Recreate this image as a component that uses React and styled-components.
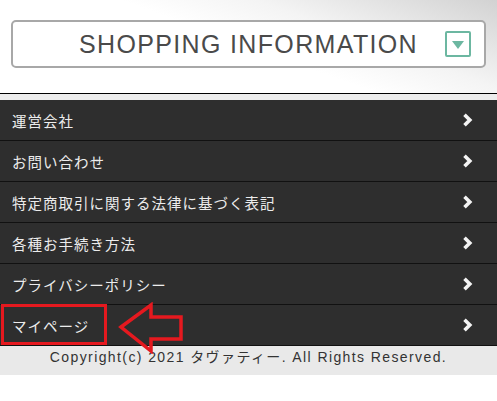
import React from 'react';
import styled, { createGlobalStyle } from 'styled-components';

const GlobalStyle = createGlobalStyle`
  html, body {
    margin: 0;
    padding: 0;
    background: #ffffff;
  }
  body {
    font-family: "Liberation Sans", "Noto Sans CJK JP", sans-serif;
  }
`;

const links = [
  '運営会社',
  'お問い合わせ',
  '特定商取引に関する法律に基づく表記',
  '各種お手続き方法',
  'プライバシーポリシー',
  'マイページ',
];

const App = () => {
  return (
    <Page>
      <GlobalStyle />
      <Header>
        <InfoBox>
          <span />
          <InfoTitle>SHOPPING INFORMATION</InfoTitle>
          <ToggleIcon>
            <svg width="12" height="8" viewBox="0 0 12 8">
              <polygon points="0,0 12,0 6,8" fill="#6cb7a1" />
            </svg>
          </ToggleIcon>
        </InfoBox>
      </Header>
      <Gap />
      <LinkList>
        {links.map((label) => (
          <LinkRow key={label}>
            <LinkLabel>{label}</LinkLabel>
            <Chevron width="11" height="14" viewBox="0 0 11 14">
              <polyline points="2.5,1.8 7.8,7 2.5,12.2" fill="none" stroke="#f4f4f4" strokeWidth="3.6" />
            </Chevron>
          </LinkRow>
        ))}
        <Highlight />
        <PointerArrow width="66" height="52" viewBox="0 0 66 52">
          <polygon
            points="3,25 33,3 33,15 63,15 63,37 33,37 33,49"
            fill="none"
            stroke="#e5191f"
            strokeWidth="3.5"
            strokeLinejoin="miter"
          />
        </PointerArrow>
      </LinkList>
      <Footer>Copyright(c) 2021 タヴァティー. All Rights Reserved.</Footer>
    </Page>
  );
};

const Page = styled.div`
  width: 100%;
`;

const Header = styled.header`
  height: 94px;
  box-sizing: border-box;
  padding: 20px 11px 0;
  background: linear-gradient(200deg, #d2d2d2 0%, #f4f4f4 32%, #ffffff 50%);
  border-bottom: 1px solid #000;
`;

const InfoBox = styled.div`
  height: 48px;
  box-sizing: border-box;
  border: 2px solid #a8a8a8;
  border-radius: 5px;
  background: #ffffff;
  display: grid;
  grid-template-columns: 1fr auto 1fr;
  align-items: center;
  padding: 0 13px;
`;

const InfoTitle = styled.h2`
  margin: 0;
  font-family: "Liberation Sans", Arial, sans-serif;
  font-weight: normal;
  font-size: 25px;
  letter-spacing: 1.35px;
  color: #4a4a4a;
  white-space: nowrap;
`;

const ToggleIcon = styled.div`
  justify-self: end;
  width: 26px;
  height: 26px;
  box-sizing: border-box;
  border: 2px solid #6cb7a1;
  border-radius: 2px;
  display: flex;
  align-items: center;
  justify-content: center;
  padding-top: 1px;
`;

const Gap = styled.div`
  height: 6px;
  background: #ececec;
`;

const LinkList = styled.nav`
  position: relative;
  background: #2e2e2e;
`;

const LinkRow = styled.div`
  height: 40px;
  display: flex;
  align-items: center;
  justify-content: space-between;
  padding: 0 24px 0 12px;
  border-bottom: 1px solid #111111;

  &:last-of-type {
    border-bottom: none;
  }
`;

const LinkLabel = styled.span`
  font-family: "Noto Sans CJK JP", sans-serif;
  font-size: 14.5px;
  letter-spacing: 1px;
  color: #ececec;
`;

const Chevron = styled.svg`
  display: block;
`;

const Highlight = styled.div`
  position: absolute;
  left: 1px;
  top: 204px;
  width: 106px;
  height: 41px;
  box-sizing: border-box;
  border: 3.5px solid #e5191f;
`;

const PointerArrow = styled.svg`
  position: absolute;
  left: 118px;
  top: 202px;
  z-index: 2;
`;

const Footer = styled.footer`
  height: 29px;
  box-sizing: border-box;
  padding-top: 3px;
  background: #e9e9e9;
  text-align: center;
  font-family: "Liberation Sans", "Noto Sans CJK JP", sans-serif;
  font-size: 14px;
  line-height: 16px;
  letter-spacing: 1.4px;
  color: #333333;
`;

export default App;
